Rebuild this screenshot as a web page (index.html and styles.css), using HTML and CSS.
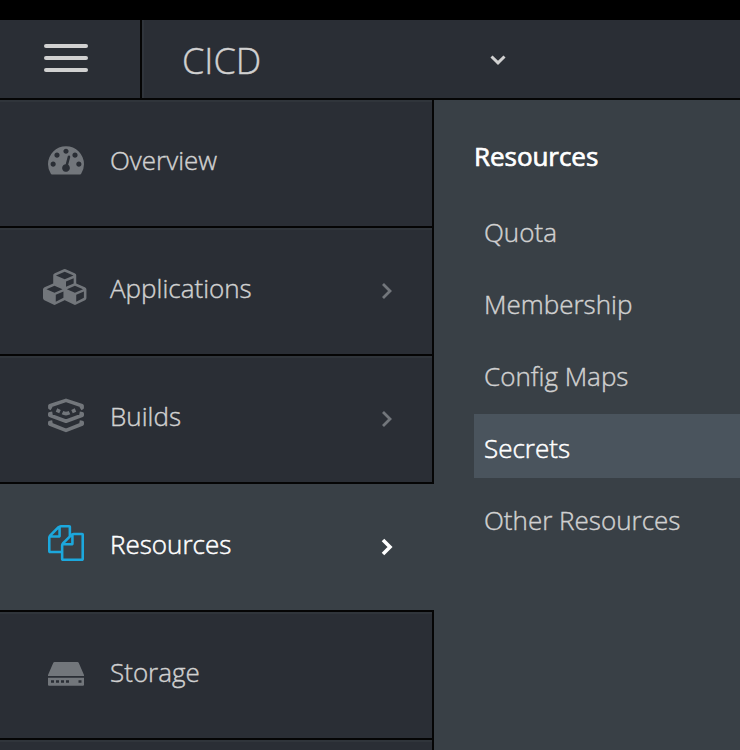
FILE: index.html
```html
<!DOCTYPE html>
<html lang="en">
<head>
<meta charset="utf-8">
<title>CICD</title>
<link rel="stylesheet" href="styles.css">
</head>
<body>
<div class="top-strip"></div>
<header class="header">
  <div class="toggle"><div class="bars"><span></span><span></span><span></span></div></div>
  <div class="project">
    <span class="project-name">CICD</span>
    <svg class="caret" width="16" height="12" viewBox="0 0 16 12"><path d="M1.500 2.500l6.500 6.300 6.500-6.300"/></svg>
  </div>
</header>
<main class="main">
  <nav class="sidebar">
    <a class="item">
      <span class="icon"><svg width="36" height="36" viewBox="0 0 1792 1792"><path d="M384 1152q0-53-37.500-90.500t-90.500-37.500-90.500 37.500-37.500 90.500 37.500 90.500 90.500 37.500 90.500-37.500 37.500-90.500zm192-448q0-53-37.500-90.500t-90.500-37.500-90.500 37.500-37.500 90.500 37.500 90.500 90.500 37.500 90.500-37.500 37.500-90.500zm428 481l101-382q6-26-7.500-48.500t-38.500-29.500-48 6.500-30 39.500l-101 382q-60 5-107 43.500t-63 98.500q-20 77 20 146t117 89 146-20 89-117q16-60-6-117t-72-91zm660-33q0-53-37.500-90.500t-90.500-37.500-90.500 37.500-37.500 90.500 37.500 90.500 90.500 37.500 90.500-37.500 37.500-90.500zm-640-640q0-53-37.500-90.500t-90.500-37.500-90.500 37.500-37.500 90.500 37.500 90.500 90.500 37.500 90.500-37.500 37.500-90.500zm448 192q0-53-37.500-90.500t-90.500-37.500-90.500 37.500-37.500 90.500 37.500 90.500 90.500 37.500 90.500-37.500 37.500-90.500zm320 448q0 261-141 483-19 29-54 29h-1402q-35 0-54-29-141-221-141-483 0-182 71-348t191-286 286-191 348-71 348 71 286 191 191 286 71 348z"/></svg></span>
      <span class="label">Overview</span>
    </a>
    <a class="item">
      <span class="icon"><svg class="cubes" width="46" height="36" viewBox="0 0 2304 1792"><path d="M640 1632l384-192v-314l-384 164v342zm-64-454l404-173-404-173-404 173zm1088 454l384-192v-314l-384 164v342zm-64-454l404-173-404-173-404 173zm-448-293l384-165v-266l-384 164v267zm-64-379l441-189-441-189-441 189zm1088 518v416q0 36-19 67t-52 47l-448 224q-25 14-57 14t-57-14l-448-224q-4-2-7-4-2 2-7 4l-448 224q-25 14-57 14t-57-14l-448-224q-33-16-52-47t-19-67v-416q0-38 21.500-70t56.500-48l434-186v-400q0-38 21.500-70t56.500-48l448-192q23-10 50-10t50 10l448 192q35 16 56.500 48t21.500 70v400l434 186q36 16 57 48t21 70z"/></svg></span>
      <span class="label">Applications</span>
      <svg class="chevron" width="14" height="20" viewBox="0 0 14 20"><path d="M3 3l7 7-7 7"/></svg>
    </a>
    <a class="item">
      <span class="icon"><svg class="layers" width="36" height="36" viewBox="0 0 36 36"><path d="M3.500 10.800L1.900 9.800V7.700L18 2.400l16.100 5.300v2.100l-1.600 1M4.500 15.200l-2.700.5v1.500L18 23.200l16.200-6v-1.500l-2.700-.5M4.500 24l-2.700.5V26L18 32.400 34.200 26v-1.500L31.500 24"/><path d="M8.500 12l3.500 1.600M14.500 14.700q3.500 1.800 7 0M24 13.600l3.500-1.600"/></svg></span>
      <span class="label">Builds</span>
      <svg class="chevron" width="14" height="20" viewBox="0 0 14 20"><path d="M3 3l7 7-7 7"/></svg>
    </a>
    <a class="item active">
      <span class="icon"><svg width="36" height="36" viewBox="0 0 1792 1792"><path d="M1696 384q40 0 68 28t28 68v1216q0 40-28 68t-68 28h-960q-40 0-68-28t-28-68v-288h-544q-40 0-68-28t-28-68v-672q0-40 20-88t48-76l408-408q28-28 76-48t88-20h416q40 0 68 28t28 68v328q68-40 128-40h416zm-544 213l-299 299h299v-299zm-640-384l-299 299h299v-299zm196 647l316-316v-416h-384v416q0 40-28 68t-68 28h-416v640h512v-256q0-40 20-88t48-76zm956 804v-1152h-384v416q0 40-28 68t-68 28h-416v640h896z"/></svg></span>
      <span class="label">Resources</span>
      <svg class="chevron" width="14" height="20" viewBox="0 0 14 20"><path d="M3 3l7 7-7 7"/></svg>
    </a>
    <a class="item">
      <span class="icon"><svg class="drive" width="36" height="36" viewBox="0 0 36 36"><path fill-rule="evenodd" d="M6.500 7h23q.8 0 1.200.8L36 20v1H0v-1L5.300 7.800q.4-.8 1.200-.8zM0 22.700h36v7q0 1-1 1H1q-1 0-1-1zM3 25.200v2.600h3v-2.600zM8 25.200v2.600h3v-2.600zM13 25.200v2.600h3v-2.600zM18 25.200v2.600h3v-2.600zM30.500 25.200v2.600h3v-2.600z"/></svg></span>
      <span class="label">Storage</span>
    </a>
    <div class="item"></div>
  </nav>
  <section class="panel">
    <h2>Resources</h2>
    <a class="link">Quota</a>
    <a class="link">Membership</a>
    <a class="link">Config Maps</a>
    <a class="link selected">Secrets</a>
    <a class="link">Other Resources</a>
  </section>
</main>
</body>
</html>
```
FILE: styles.css
```css
* { box-sizing: border-box; }
body { margin: 0; width: 740px; height: 750px; overflow: hidden; background: #394046; font-family: "Open Sans", sans-serif; font-size: 26px; font-weight: 300; color: #d1d1d1; -webkit-text-stroke: 0.4px currentColor; }
.top-strip { height: 20px; background: #000; }
.header { display: flex; height: 80px; background: #2a2e35; border-bottom: 2px solid #050505; }
.toggle { width: 142px; border-right: 2px solid #050505; padding: 24px 0 0 44px; }
.bars { display: flex; flex-direction: column; gap: 8px; width: 44px; }
.bars span { height: 4px; border-radius: 2px; background: #d1d1d1; }
.project { flex: 1; display: flex; align-items: center; border-left: 2px solid #30353c; padding-left: 38px; }
.project-name { width: 308px; font-size: 36px; line-height: 50px; margin-top: 3px; }
.caret, .chevron, .layers { fill: none; }
.caret { stroke: #d1d1d1; stroke-width: 3; margin-top: 2px; }
.main { display: flex; height: 650px; overflow: hidden; }
.sidebar { display: grid; grid-template-rows: repeat(5, 128px) 10px; width: 434px; flex: none; }
.item { display: flex; align-items: center; padding: 0 38px 7px 0; background: #2a2e35; border-right: 2px solid #050505; border-bottom: 2px solid #050505; box-shadow: inset 0 2px #30353b; overflow: hidden; }
.item:last-child { padding: 0; border-bottom: 0; }
.item.active { background: #394046; border-right: 0; padding-right: 40px; box-shadow: none; color: #fff; }
.icon { display: flex; justify-content: center; width: 66px; margin-left: 33px; margin-right: 11px; fill: #72767b; }
.icon svg { display: block; margin-bottom: 2px; }
.active .icon { fill: #1ca8dd; }
.icon .cubes { margin-right: 1px; }
.icon .cubes { margin-bottom: 2px; }
.icon .layers { stroke: #72767b; stroke-width: 3.600; stroke-linejoin: round; margin: 0; }
.icon .drive { margin: 2px 0 0; }
.label { flex: 1; line-height: 36px; white-space: nowrap; }
.chevron { stroke: #72767b; stroke-width: 2.800; margin-top: 6px; }
.active .chevron { stroke: #fff; stroke-width: 3.600; }
.active .label { -webkit-text-stroke-width: 0.5px; }
.panel { flex: 1; padding: 36px 0 0 40px; }
h2 { margin: 0 0 22px; font-size: 26px; line-height: 40px; font-weight: 400; color: #fff; letter-spacing: -0.05px; -webkit-text-stroke-width: 0.7px; }
.link { display: block; height: 64px; margin-bottom: 8px; padding: 0 0 0 10px; line-height: 68px; white-space: nowrap; }
.selected { background: #4a545d; color: #fff; -webkit-text-stroke-width: 0.5px; }
```
